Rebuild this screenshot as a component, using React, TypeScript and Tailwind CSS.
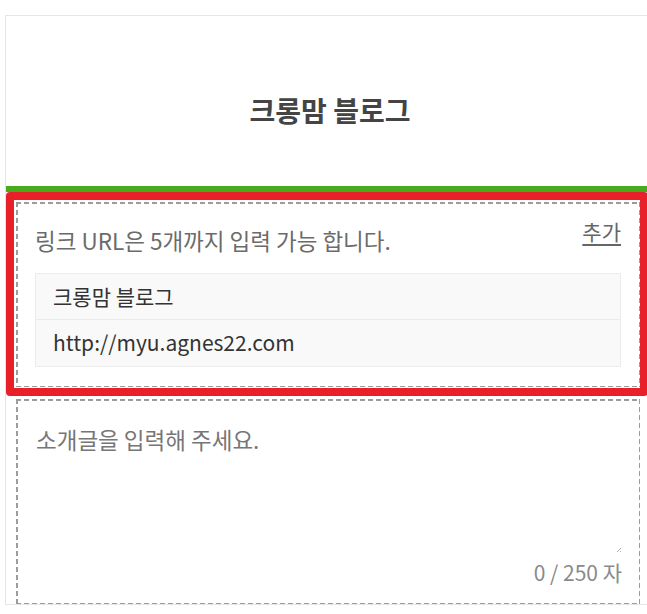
const font = { fontFamily: '"Noto Sans CJK KR", "Noto Sans", sans-serif' };

// long dashes like the original (5px dash / 3px gap), drawn with gradients
const dashed =
  'bg-[linear-gradient(to_right,#9c9c9c_62%,transparent_0),linear-gradient(to_right,#9c9c9c_62%,transparent_0),linear-gradient(to_bottom,#9c9c9c_62%,transparent_0),linear-gradient(to_bottom,#9c9c9c_62%,transparent_0)] bg-[length:8px_1.5px,8px_1.5px,1.5px_8px,1.5px_8px] bg-[position:0_0,0_100%,0_0,100%_0] [background-repeat:repeat-x,repeat-x,repeat-y,repeat-y]';

const LinkRow = ({ text, last }: { text: string; last?: boolean }) => (
  <div className={`h-[46px] flex items-center px-[17px] text-[21px] text-[#333] ${last ? '' : 'border-b border-[#ececec]'}`}>
    {text}
  </div>
);

export default function App() {
  return (
    <div className="w-full h-[614px] overflow-hidden bg-white" style={font}>
      <div className="mt-[15px] ml-[5px] w-[660px] border border-[#e6e6e6]">
        {/* title */}
        <div className="h-[170px] flex items-center justify-center pt-[17px] pr-[10px]">
          <h1 className="text-[28px] font-bold text-[#444]">크롱맘 블로그</h1>
        </div>
        <div className="h-[6px] bg-[#47ab1c]" />

        <div className="pt-[10px] pl-[10px] flex flex-col gap-[12px]">
          {/* link section, highlighted */}
          <div className="relative w-[624px]">
            <div className={`${dashed} pt-[21px] pb-[20px] px-[19px]`}>
              <div className="flex justify-between items-start">
                <p className="text-[22.5px] leading-[34px] text-[#6b6b6b]">링크 URL은 5개까지 입력 가능 합니다.</p>
                <a className="-mt-[4px] text-[21px] leading-[24px] text-[#666] underline underline-offset-[4px]">추가</a>
              </div>
              <div className="mt-[16px] border border-[#ececec] bg-[#f9f9f9]">
                <LinkRow text="크롱맘 블로그" />
                <LinkRow text="http://myu.agnes22.com" last />
              </div>
            </div>
            <div className="absolute -left-[10px] -top-[10px] -right-[8px] -bottom-[9px] border-[8px] border-[#e8202a] rounded-[4px] pointer-events-none" />
          </div>

          {/* intro textarea */}
          <div className={`${dashed} relative w-[624px] h-[205px] px-[20px] pt-[24px]`}>
            <p className="text-[22.5px] leading-[32px] text-[#767676]">소개글을 입력해 주세요.</p>
            <svg className="absolute right-[18px] bottom-[51px]" width="6" height="6" viewBox="0 0 6 6">
              <path d="M5 1L1 5M5 4L4 5" stroke="#999" strokeWidth="0.8" />
            </svg>
            <span className="absolute right-[18px] bottom-[18px] text-[21px] leading-[28px] text-[#8a8a8a]">0 / 250 자</span>
          </div>
        </div>
      </div>
    </div>
  );
}
